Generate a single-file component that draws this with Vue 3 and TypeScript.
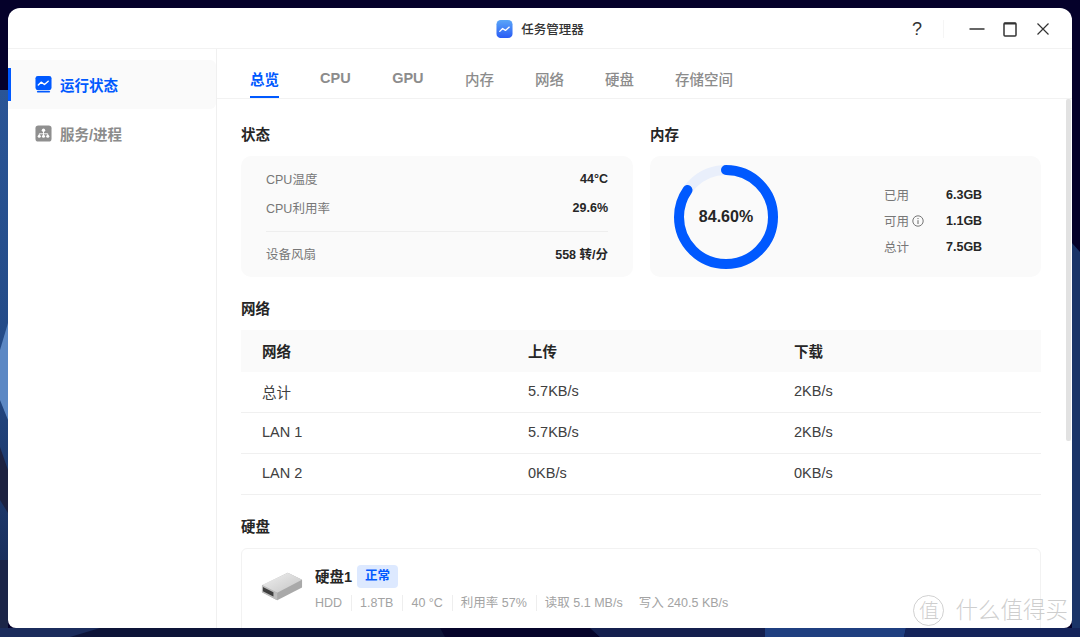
<script setup lang="ts">
const tabs: string[] = ['总览', 'CPU', 'GPU', '内存', '网络', '硬盘', '存储空间']
const rows = [
  { name: '总计', up: '5.7KB/s', down: '2KB/s' },
  { name: 'LAN 1', up: '5.7KB/s', down: '2KB/s' },
  { name: 'LAN 2', up: '0KB/s', down: '0KB/s' },
]
const diskMeta: string[] = ['HDD', '1.8TB', '40 °C', '利用率 57%', '读取 5.1 MB/s']
const r = 47
const c = 2 * Math.PI * r
const dash = `${c * 0.846} ${c}`
const isLatin = (t: string): boolean => /^[A-Z]/.test(t)
</script>

<template>
  <div class="desktop">
    <svg class="wallpaper" viewBox="0 0 1080 637" preserveAspectRatio="none">
      <defs>
        <linearGradient id="lg" x1="0" y1="0" x2="0" y2="1">
          <stop offset="0" stop-color="#2a5596" />
          <stop offset="0.5" stop-color="#234a86" />
          <stop offset="1" stop-color="#16264f" />
        </linearGradient>
      </defs>
      <rect width="1080" height="637" fill="#05012a" />
      <rect x="0" y="90" width="8" height="540" fill="url(#lg)" />
      <path d="M1072 243 L1080 252 V637 H1072 Z" fill="#1a3468" />
      <path d="M0 350 L8 323 V420 L0 400 Z" fill="#5c88c4" />
      <path d="M0 447 L8 470 V513 L0 500 Z" fill="#1d2240" />
      <path d="M0 560 H8 V628 H0 Z" fill="#1b2547" />
      <rect x="0" y="628" width="1080" height="9" fill="#0d1438" />
      <path d="M0 628 H100 L70 637 H0 Z" fill="#1b2c5c" />
      <path d="M440 628 H590 L600 637 H445 Z" fill="#05042a" />
      <path d="M590 628 H765 V637 H600 Z" fill="#141f4e" />
      <path d="M765 628 H906 L904 637 H765 Z" fill="#1f3f80" />
      <path d="M906 628 H1080 V637 H904 Z" fill="#14245a" />
    </svg>
    <div class="window">
      <header class="titlebar">
        <div class="title">
          <svg class="app-icon" viewBox="0 0 18 20" width="17" height="20">
            <defs>
              <linearGradient id="ai" x1="0" y1="0" x2="0" y2="1">
                <stop offset="0" stop-color="#5aa6f8" />
                <stop offset="1" stop-color="#2a5cf5" />
              </linearGradient>
            </defs>
            <rect x="0.5" y="0.5" width="17" height="19" rx="4.5" fill="url(#ai)" />
            <path d="M4 12.5 L7 9.5 L10 11.5 L14 8" fill="none" stroke="#fff" stroke-width="1.4" stroke-linecap="round" stroke-linejoin="round" />
          </svg>
          <span>任务管理器</span>
        </div>
        <div class="win-controls">
          <span class="help">?</span>
          <span class="ctrl-sep"></span>
          <svg viewBox="0 0 16 16" width="16" height="16"><path d="M0.5 8 H15.5" stroke="#333" stroke-width="1.3" /></svg>
          <svg viewBox="0 0 16 16" width="16" height="16"><rect x="2" y="2" width="12" height="13" rx="1" fill="none" stroke="#333" stroke-width="1.5" /><path d="M2 2.6 H14" stroke="#333" stroke-width="1.8" /></svg>
          <svg viewBox="0 0 16 16" width="16" height="16"><path d="M2.5 2.5 L13.5 13.5 M13.5 2.5 L2.5 13.5" stroke="#333" stroke-width="1.2" /></svg>
        </div>
      </header>
      <div class="body">
        <aside class="sidebar">
          <div class="nav-item active">
            <svg viewBox="0 0 18 18" width="17" height="17">
              <rect x="0.5" y="0" width="17" height="15" rx="2.5" fill="#0059ff" />
              <rect x="2" y="16" width="14" height="1.5" rx="0.7" fill="#0059ff" />
              <path d="M3.5 9.5 L6.5 6.5 L10 9 L14 5.5" fill="none" stroke="#fff" stroke-width="1.5" stroke-linecap="round" stroke-linejoin="round" />
            </svg>
            <span>运行状态</span>
          </div>
          <div class="nav-item">
            <svg viewBox="0 0 18 18" width="17" height="17">
              <rect x="0.5" y="0.5" width="17" height="17" rx="3" fill="#8f8f8f" />
              <circle cx="9" cy="5.5" r="1.8" fill="#fff" />
              <circle cx="4.5" cy="12" r="1.6" fill="#fff" />
              <circle cx="9" cy="12" r="1.6" fill="#fff" />
              <circle cx="13.5" cy="12" r="1.6" fill="#fff" />
              <path d="M9 6 V12 M4.5 12 V9.3 H13.5 V12" fill="none" stroke="#fff" stroke-width="1" />
            </svg>
            <span>服务/进程</span>
          </div>
        </aside>
        <main class="main">
          <nav class="tabs">
            <div v-for="(t, i) in tabs" :key="t" class="tab" :class="{ current: i === 0, latin: isLatin(t) }">{{ t }}</div>
          </nav>
          <div class="content-wrap">
            <div class="content">
              <div class="two-col">
                <section>
                  <h3>状态</h3>
                  <div class="card status">
                    <div class="kv"><span>CPU温度</span><b>44°C</b></div>
                    <div class="kv"><span>CPU利用率</span><b>29.6%</b></div>
                    <div class="divider"></div>
                    <div class="kv"><span>设备风扇</span><b>558 转/分</b></div>
                  </div>
                </section>
                <section>
                  <h3>内存</h3>
                  <div class="card memory">
                    <div class="ring">
                      <svg viewBox="0 0 104 104" width="104" height="104">
                        <circle cx="52" cy="52" :r="r" fill="none" stroke="#e9effb" stroke-width="10" />
                        <circle cx="52" cy="52" :r="r" fill="none" stroke="#0059ff" stroke-width="10" stroke-linecap="round" :stroke-dasharray="dash" transform="rotate(-90 52 52)" />
                      </svg>
                      <span class="pct">84.60%</span>
                    </div>
                    <div class="mem-list">
                      <div class="mem-row"><span>已用</span><b>6.3GB</b></div>
                      <div class="mem-row">
                        <span class="avail">可用
                          <svg viewBox="0 0 12 12" width="12" height="12"><circle cx="6" cy="6" r="5.2" fill="none" stroke="#666" stroke-width="0.9" /><path d="M6 5.2 V9 M6 3 V4.1" stroke="#666" stroke-width="1" /></svg>
                        </span>
                        <b>1.1GB</b>
                      </div>
                      <div class="mem-row"><span>总计</span><b>7.5GB</b></div>
                    </div>
                  </div>
                </section>
              </div>

              <h3 class="net-title">网络</h3>
              <div class="net-table">
                <div class="net-row head"><span>网络</span><span>上传</span><span>下载</span></div>
                <div v-for="row in rows" :key="row.name" class="net-row">
                  <span>{{ row.name }}</span><span>{{ row.up }}</span><span>{{ row.down }}</span>
                </div>
              </div>

              <h3 class="disk-title">硬盘</h3>
              <div class="disk-card">
                <svg class="disk-img" viewBox="0 0 44 30" width="42" height="29">
                  <defs>
                    <linearGradient id="dt" x1="0" y1="0" x2="1" y2="1">
                      <stop offset="0" stop-color="#f1f1f1" />
                      <stop offset="1" stop-color="#c4c4c4" />
                    </linearGradient>
                  </defs>
                  <path d="M1 14 L28 0.5 L43 8 V16 L17 29.5 L1 21 Z" fill="#a9a9a9" />
                  <path d="M1 13.5 L28 0.5 L43 8 L17 21.5 Z" fill="url(#dt)" />
                  <path d="M1 13.5 L17 21.5 V29.5 L1 21 Z" fill="#bdbdbd" />
                  <path d="M2 15.5 L13 21 V25.5 L2 20 Z" fill="#3f3f3f" />
                </svg>
                <div class="disk-info">
                  <div class="disk-name"><b>硬盘1</b><span class="badge">正常</span></div>
                  <div class="disk-meta">
                    <span v-for="m in diskMeta" :key="m" class="meta-item">{{ m }}</span>
                    <span class="meta-item last">写入 240.5 KB/s</span>
                  </div>
                </div>
              </div>
            </div>
            <div class="scrollbar"></div>
          </div>
        </main>
      </div>
      <div class="watermark">
        <span class="wm-circle">值</span>
        <span>什么值得买</span>
      </div>
    </div>
  </div>
</template>

<style>
html, body { margin: 0; padding: 0; background: #05012a; }
</style>

<style scoped>
.desktop {
  position: relative;
  width: 1080px;
  height: 637px;
  overflow: hidden;
  padding: 8px 8px 9px;
  box-sizing: border-box;
  font-family: "Liberation Sans", "Noto Sans CJK SC", sans-serif;
  color: #262626;
}
.wallpaper { position: absolute; inset: 0; width: 100%; height: 100%; }
.window {
  position: relative;
  height: 620px;
  background: #fff;
  border-radius: 12px 12px 8px 8px;
  overflow: hidden;
  display: flex;
  flex-direction: column;
}
.titlebar {
  height: 41px;
  flex: none;
  border-bottom: 1px solid #f2f2f2;
  box-sizing: border-box;
  display: flex;
  align-items: center;
  justify-content: center;
  position: relative;
}
.title {
  display: flex;
  align-items: center;
  gap: 8px;
  font-size: 12.5px;
  font-weight: 500;
  color: #333;
  margin-top: 1px;
}
.win-controls {
  position: absolute;
  right: 21px;
  top: 12px;
  display: flex;
  align-items: center;
  gap: 17px;
}
.help {
  font-size: 18px;
  color: #333;
  width: 12px;
  text-align: center;
  line-height: 16px;
  margin-right: 3px;
}
.ctrl-sep { width: 1px; height: 18px; background: #f5f5f5; margin: 0 8px 0 0; }
.body { flex: 1; display: flex; min-height: 0; }
.sidebar {
  width: 208px;
  flex: none;
  border-right: 1px solid #f0f0f0;
  padding-top: 11px;
}
.nav-item {
  position: relative;
  height: 49px;
  display: flex;
  align-items: center;
  gap: 8px;
  padding-left: 27px;
  font-size: 14.5px;
  font-weight: 600;
  color: #8c8c8c;
  border-radius: 0 6px 6px 0;
}
.nav-item.active { background: #fafafa; color: #0059ff; }
.nav-item.active::before {
  content: "";
  position: absolute;
  left: 0;
  top: 8px;
  width: 3px;
  height: 33px;
  background: #0059ff;
}
.main { flex: 1; min-width: 0; display: flex; flex-direction: column; }
.tabs {
  height: 50px;
  flex: none;
  box-sizing: border-box;
  border-bottom: 1px solid #f2f2f2;
  display: flex;
  gap: 41px;
  padding-left: 33px;
}
.tab {
  height: 50px;
  box-sizing: border-box;
  padding-top: 20px;
  line-height: 22px;
  font-size: 14.5px;
  font-weight: 500;
  color: #8c8c8c;
  position: relative;
}
.tab.latin { padding-top: 18px; font-weight: 700; margin-right: 0.5px; }
.tab.current { color: #0059ff; font-weight: 700; }
.tab.current::after {
  content: "";
  position: absolute;
  left: 0;
  right: 0;
  bottom: 1px;
  height: 2px;
  background: #0059ff;
}
.content-wrap { flex: 1; min-height: 0; position: relative; overflow: hidden; }
.content { padding: 0 31px 0 24px; }
.scrollbar {
  position: absolute;
  right: 1px;
  top: 0;
  width: 5px;
  height: 342px;
  border-radius: 2px;
  background: #e2e2e2;
}
.two-col { display: grid; grid-template-columns: 392px 391px; gap: 17px; }
h3 {
  margin: 0;
  font-size: 14.5px;
  font-weight: 600;
  line-height: 22px;
  color: #262626;
}
.two-col h3 { padding-top: 25px; margin-bottom: 10px; }
.card { background: #fafafa; border-radius: 10px; height: 121px; box-sizing: border-box; }
.status { padding: 8px 25px 0; }
.kv {
  display: flex;
  justify-content: space-between;
  align-items: center;
  height: 29px;
  font-size: 12.5px;
  color: #777;
}
.kv b { color: #262626; font-weight: 700; }
.divider { height: 1px; background: #eee; margin: 9px 0 7px; }
.memory { display: flex; align-items: center; padding-left: 24px; }
.ring { position: relative; width: 104px; height: 104px; flex: none; margin-top: 1px; }
.ring svg { display: block; }
.pct {
  position: absolute;
  inset: 0;
  display: flex;
  align-items: center;
  justify-content: center;
  font-size: 16px;
  font-weight: 700;
  color: #262626;
}
.mem-list { margin-left: 106px; margin-top: 8px; }
.mem-row {
  display: flex;
  align-items: center;
  height: 26px;
  font-size: 12.5px;
  color: #777;
}
.mem-row > span { width: 62px; }
.mem-row b { color: #262626; font-weight: 700; }
.avail { display: inline-flex; align-items: center; gap: 3px; }
.net-title { margin-top: 21px; margin-bottom: 10px; }
.net-row {
  display: grid;
  grid-template-columns: 266px 266px 1fr;
  align-items: center;
  padding-left: 21px;
  padding-bottom: 2px;
  font-size: 14.5px;
  color: #404040;
  border-bottom: 1px solid #f0f0f0;
  height: 38px;
}
.net-row.head {
  background: #fafafa;
  border-bottom: 0;
  height: 40px;
  font-weight: 600;
  color: #262626;
}
.disk-title { margin-top: 21px; margin-bottom: 10px; }
.disk-card {
  border: 1px solid #f2f2f2;
  border-radius: 6px;
  height: 110px;
  box-sizing: border-box;
  display: flex;
  align-items: flex-start;
  padding: 16px 0 0 19px;
}
.disk-img { margin-top: 7px; flex: none; }
.disk-info { margin-left: 12px; }
.disk-name { display: flex; align-items: center; gap: 5px; height: 23px; }
.disk-name b { font-size: 14.5px; font-weight: 600; color: #262626; margin-top: -3px; }
.badge {
  background: #dde9ff;
  color: #0059ff;
  font-size: 12.5px;
  font-weight: 600;
  height: 23px;
  line-height: 23px;
  padding: 0 8px;
  border-radius: 4px;
}
.disk-meta { display: flex; margin-top: 7px; font-size: 12.5px; color: #a3a3a3; line-height: 16px; }
.meta-item { padding-right: 9px; margin-right: 8px; border-right: 1px solid #eee; }
.meta-item.last { border-right: 0; }
.meta-item:nth-child(5) { border-right: 0; padding-right: 8px; }
.watermark {
  position: absolute;
  right: 4px;
  bottom: 2px;
  display: flex;
  align-items: center;
  gap: 11px;
  font-size: 22.5px;
  line-height: 26px;
  color: rgba(190, 190, 190, 0.75);
  font-weight: 300;
}
.wm-circle {
  width: 29px;
  height: 29px;
  border: 1px solid rgba(190, 190, 190, 0.7);
  border-radius: 50%;
  display: flex;
  align-items: center;
  justify-content: center;
  font-size: 20px;
}
</style>
